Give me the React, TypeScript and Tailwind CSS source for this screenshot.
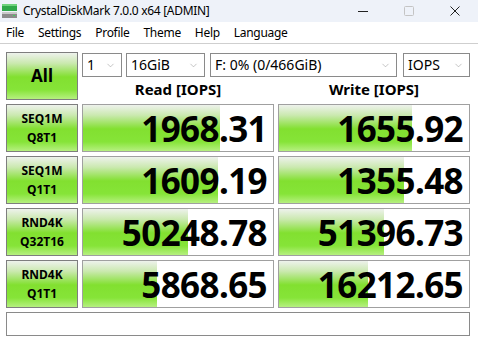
import { ChevronDown } from 'lucide-react';

const rows = [
  { top: 'SEQ1M', bottom: 'Q8T1', read: '1968.31', readPct: 72, write: '1655.92', writePct: 70 },
  { top: 'SEQ1M', bottom: 'Q1T1', read: '1609.19', readPct: 71, write: '1355.48', writePct: 66 },
  { top: 'RND4K', bottom: 'Q32T16', read: '50248.78', readPct: 55, write: '51396.73', writePct: 55 },
  { top: 'RND4K', bottom: 'Q1T1', read: '5868.65', readPct: 39, write: '16212.65', writePct: 47 },
];

const menu = ['File', 'Settings', 'Profile', 'Theme', 'Help', 'Language'];

// green button / bar gradient, same look as the CDM default theme
const greenBg =
  'bg-[linear-gradient(to_bottom,#eef2ec_0%,#cbe9b0_22%,#82e030_52%,#86e438_80%,#b6f080_100%)]';

const Select = ({ label, width }: { label: string; width: string }) => (
  <div className={`${width} h-[24px] border border-[#8a8a8a] bg-white flex items-center justify-between pl-[4px] pr-[5px]`}>
    <span className="text-[14px] leading-none text-black">{label}</span>
    <ChevronDown className="w-[11px] h-[11px] text-[#9a9a9a]" strokeWidth={1.25} />
  </div>
);

const Score = ({ value, pct }: { value: string; pct: number }) => (
  <div className="relative h-[48px] border border-[#a0a0a0] bg-white overflow-hidden">
    <div className={`absolute left-0 top-0 bottom-0 ${greenBg}`} style={{ width: `${pct}%` }} />
    <div className="relative h-full flex items-center justify-end pr-[6px] text-[35px] font-bold leading-none text-black tracking-[-0.6px]">
      {value}
    </div>
  </div>
);

export default function App() {
  return (
    <div className="w-[478px] h-[343px] bg-white overflow-hidden font-['Noto_Sans',sans-serif] text-black">
      {/* Title bar */}
      <div className="h-[22px] bg-[#eef2f9] flex items-center">
        <svg width="16" height="16" viewBox="0 0 16 16" className="ml-[2px]">
          <rect x="0" y="1" width="15" height="7" fill="#2fa84a" />
          <rect x="0" y="1" width="15" height="2" fill="#6fd27d" />
          <rect x="0" y="9" width="15" height="6" fill="#8c8c8c" />
          <rect x="0" y="9" width="15" height="2" fill="#c9c9c9" />
          <rect x="11" y="12" width="2" height="1" fill="#3bd35a" />
        </svg>
        <span className="ml-[5px] text-[12px] tracking-[-0.3px] text-black">CrystalDiskMark 7.0.0 x64 [ADMIN]</span>
        <div className="ml-auto flex h-full">
          <div className="w-[46px] flex items-center justify-center">
            <svg width="10" height="10" viewBox="0 0 10 10">
              <line x1="0" y1="5.5" x2="10" y2="5.5" stroke="#222" strokeWidth="1" />
            </svg>
          </div>
          <div className="w-[46px] flex items-center justify-center">
            <svg width="10" height="10" viewBox="0 0 10 10">
              <rect x="0.5" y="0.5" width="9" height="9" rx="1" fill="none" stroke="#c4c4c4" strokeWidth="1" />
            </svg>
          </div>
          <div className="w-[46px] flex items-center justify-center">
            <svg width="10" height="10" viewBox="0 0 10 10">
              <path d="M0.5 0.5 L9.5 9.5 M9.5 0.5 L0.5 9.5" stroke="#222" strokeWidth="1" />
            </svg>
          </div>
        </div>
      </div>

      {/* Menu bar */}
      <div className="h-[22px] border-b border-[#cfcfcf] flex items-center pl-[6px] gap-[14px] text-[12px] tracking-[-0.3px]">
        {menu.map((m) => (
          <span key={m}>{m}</span>
        ))}
      </div>

      {/* Main panel */}
      <div className="pl-[6px] pt-[8px]">
        <div className="grid grid-cols-[72px_192px_192px] gap-x-[4px] gap-y-[4px]">
          <div className={`h-[48px] border border-[#7e7e7e] ${greenBg} flex items-center justify-center text-[17px] font-bold`}>
            All
          </div>
          <div className="col-span-2 flex flex-col">
            <div className="flex mt-[1px]">
              <Select label="1" width="w-[40px]" />
              <div className="w-[4px]" />
              <Select label="16GiB" width="w-[79px]" />
              <div className="w-[5px]" />
              <Select label="F: 0% (0/466GiB)" width="w-[187px]" />
              <div className="w-[6px]" />
              <Select label="IOPS" width="w-[67px]" />
            </div>
            <div className="flex-1 grid grid-cols-[192px_192px] gap-x-[4px] items-center">
              <div className="text-center text-[15px] font-bold leading-none pt-[2px]">Read [IOPS]</div>
              <div className="text-center text-[15px] font-bold leading-none pt-[2px]">Write [IOPS]</div>
            </div>
          </div>

          {rows.map((r) => (
            <div key={r.top + r.bottom} className="contents">
              <div className={`h-[48px] border border-[#7e7e7e] ${greenBg} flex flex-col items-center justify-center text-[12px] font-bold leading-[19px]`}>
                <span>{r.top}</span>
                <span>{r.bottom}</span>
              </div>
              <Score value={r.read} pct={r.readPct} />
              <Score value={r.write} pct={r.writePct} />
            </div>
          ))}
        </div>

        {/* Comment box */}
        <div className="mt-[4px] w-[464px] h-[24px] border border-[#8a8a8a] bg-white" />
      </div>
    </div>
  );
}
